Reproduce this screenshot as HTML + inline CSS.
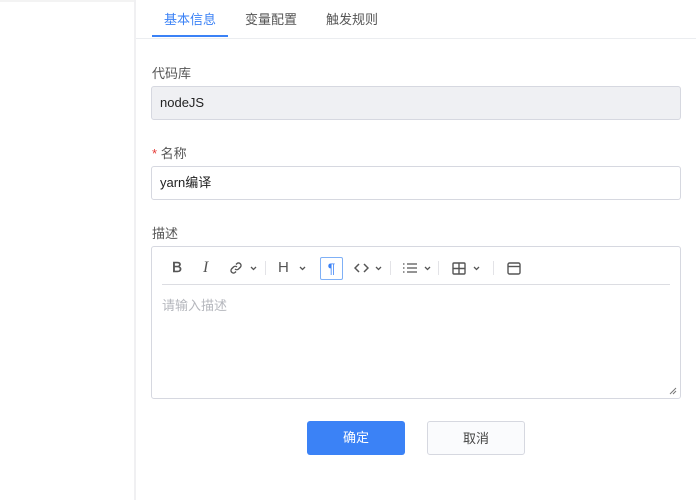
<!DOCTYPE html>
<html><head><meta charset="utf-8"><style>
*{box-sizing:border-box;margin:0;padding:0}
body{width:696px;height:500px;overflow:hidden;background:#fff;font-family:"Liberation Sans","Noto Sans CJK SC",sans-serif;font-size:13px;color:#333;position:relative}
.side{position:absolute;left:0;top:0;width:134px;height:500px;background:#fff;border-top:2px solid #f3f3f3}
.vbar{position:absolute;left:134px;top:0;width:2px;height:500px;background:#f0f0f2}
.tabs{position:absolute;left:136px;top:0;right:0;height:39px;border-bottom:1px solid #ebedf0}
.tab{position:absolute;top:9px;font-size:13px;color:#555}
.tab.a{color:#3b82f6}
.ul{position:absolute;left:16px;top:35px;width:76px;height:2px;background:#3b82f6}
.lbl{position:absolute;left:152px;font-size:13px;color:#555}
.inp{position:absolute;left:151px;width:530px;height:34px;border:1px solid #d6d8e0;border-radius:3px;padding:0 8px;line-height:32px;font-size:13px;color:#222}
.ed{position:absolute;left:151px;top:246px;width:530px;height:153px;border:1px solid #d6d8e0;border-radius:3px}
.tb{position:absolute;left:10px;right:10px;top:0;height:38px;border-bottom:1px solid #dcdde2}
.ic{position:absolute;top:12px;color:#555;font-size:15px;line-height:18px}
.sep{position:absolute;top:14px;width:1px;height:14px;background:#e3e3e7}
.car{position:absolute;top:19px}
.btn{position:absolute;top:421px;width:98px;height:34px;border-radius:3px;text-align:center;line-height:34px;font-size:13px}
</style></head><body>
<div class="side"></div><div class="vbar"></div>
<div class="tabs">
<span class="tab a" style="left:28px">基本信息</span>
<span class="tab" style="left:109px">变量配置</span>
<span class="tab" style="left:190px">触发规则</span>
<div class="ul"></div></div>
<div class="lbl" style="top:63px">代码库</div>
<div class="inp" style="top:86px;background:#eff0f3">nodeJS</div>
<div class="lbl" style="top:143px"><span style="color:#e53935">*</span> 名称</div>
<div class="inp" style="top:166px">yarn编译</div>
<div class="lbl" style="top:223px">描述</div>
<div class="ed">
<div class="tb">
<span class="ic" style="left:10px;-webkit-text-stroke:0.4px #555">B</span>
<span class="ic" style="left:41px;font-style:italic;font-family:'Liberation Serif',serif;font-size:16px">I</span>
<svg style="position:absolute;left:67px;top:14px" width="14" height="14" viewBox="0 0 14 14" fill="none" stroke="#555" stroke-width="1.4"><path d="M6 8a2.5 2.5 0 0 0 3.5 0l2-2a2.5 2.5 0 0 0-3.5-3.5l-1 1"/><path d="M8 6a2.5 2.5 0 0 0-3.5 0l-2 2a2.5 2.5 0 0 0 3.5 3.5l1-1"/></svg>
<svg class="car" style="left:88px" width="7" height="5" viewBox="0 0 7 5" fill="none" stroke="#555" stroke-width="1.3"><path d="M1 1l2.5 2.5L6 1"/></svg>
<div class="sep" style="left:103px"></div>
<span class="ic" style="left:116px">H</span>
<svg class="car" style="left:137px" width="7" height="5" viewBox="0 0 7 5" fill="none" stroke="#555" stroke-width="1.3"><path d="M1 1l2.5 2.5L6 1"/></svg>
<div style="position:absolute;left:158px;top:10px;width:23px;height:23px;border:1px solid #7fb0f6;border-radius:2px;color:#3b82f6;text-align:center;line-height:21px;font-size:14px">¶</div>
<svg style="position:absolute;left:192px;top:16px" width="15" height="10" viewBox="0 0 15 10" fill="none" stroke="#555" stroke-width="1.5"><path d="M5 1L1 5l4 4M10 1l4 4-4 4"/></svg>
<svg class="car" style="left:213px" width="7" height="5" viewBox="0 0 7 5" fill="none" stroke="#555" stroke-width="1.3"><path d="M1 1l2.5 2.5L6 1"/></svg>
<div class="sep" style="left:228px"></div>
<svg style="position:absolute;left:241px;top:16px" width="14" height="10" viewBox="0 0 14 10" stroke="#555" stroke-width="1.3"><path d="M0 1h1.5M4 1h10M0 5h1.5M4 5h10M0 9h1.5M4 9h10"/></svg>
<svg class="car" style="left:262px" width="7" height="5" viewBox="0 0 7 5" fill="none" stroke="#555" stroke-width="1.3"><path d="M1 1l2.5 2.5L6 1"/></svg>
<div class="sep" style="left:276px"></div>
<svg style="position:absolute;left:290px;top:15px" width="14" height="13" viewBox="0 0 14 13" fill="none" stroke="#555" stroke-width="1.4"><rect x="1" y="1" width="12" height="11" rx="1"/><path d="M1 6.5h12M7 1v11"/></svg>
<svg class="car" style="left:311px" width="7" height="5" viewBox="0 0 7 5" fill="none" stroke="#555" stroke-width="1.3"><path d="M1 1l2.5 2.5L6 1"/></svg>
<div class="sep" style="left:331px"></div>
<svg style="position:absolute;left:345px;top:15px" width="14" height="13" viewBox="0 0 14 13" fill="none" stroke="#555" stroke-width="1.4"><rect x="1" y="1" width="12" height="11" rx="1.5"/><path d="M1 4.5h12"/></svg>
</div>
<div style="position:absolute;left:10px;top:48px;color:#b5b7bd;font-size:13px">请输入描述</div>
<svg style="position:absolute;right:3px;bottom:3px" width="8" height="8" stroke="#777" stroke-width="1"><path d="M1 7L7 1M4 7L7 4"/></svg>
</div>
<div class="btn" style="left:307px;background:#3b82f6;color:#fff">确定</div>
<div class="btn" style="left:427px;background:#fafbfd;border:1px solid #d6d8e0;color:#444">取消</div>
</body></html>
